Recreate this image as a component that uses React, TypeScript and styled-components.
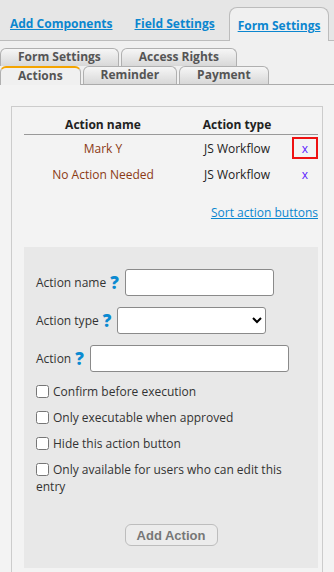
import styled, { createGlobalStyle } from "styled-components";

const Global = createGlobalStyle`
  body {
    margin: 0;
    font-family: "Open Sans", "Noto Sans", sans-serif;
    background: #f3f3f3;
    color: #222;
  }
`;

const TopBar = styled.div`
  display: flex;
  align-items: flex-end;
  gap: 6px;
  height: 40px;
  padding-left: 2px;
  background: #e6e6e6;
  border-bottom: 1px solid #bcbcbc;
`;

const TopTab = styled.a<{ $active?: boolean }>`
  display: flex;
  align-items: center;
  flex-shrink: 0;
  white-space: nowrap;
  box-sizing: border-box;
  height: ${(p) => (p.$active ? "34px" : "33px")};
  padding: 0 8px;
  font-size: 12px;
  font-weight: bold;
  color: #0b86cf;
  text-decoration: underline;
  cursor: pointer;
  ${(p) =>
    p.$active &&
    `
    background: #f0f0f0;
    border: 1px solid #bcbcbc;
    border-bottom: none;
    border-radius: 8px 8px 0 0;
    margin-bottom: -1px;
    padding-top: 2px;
  `}
`;

const SubTabs = styled.div`
  background: #f0f0f0;
  padding-top: 7px;
`;

const SubRow = styled.div<{ $base?: boolean }>`
  display: flex;
  gap: 2px;
  ${(p) => p.$base && "border-bottom: 1px solid #ababab;"}
`;

const SubTab = styled.div<{ $active?: boolean }>`
  box-sizing: border-box;
  white-space: nowrap;
  height: ${(p) => (p.$active ? "19px" : "18px")};
  padding: 0 17px;
  border: 1px solid #b0b0b0;
  border-bottom: none;
  border-radius: 6px 6px 0 0;
  font-size: 12px;
  font-weight: bold;
  line-height: 16px;
  color: #555;
  background: ${(p) => (p.$active ? "#f0f0f0" : "linear-gradient(#f6f6f6, #d8d8d8)")};
  ${(p) =>
    p.$active &&
    `
    border-top: 2px solid #f4a400;
    margin-bottom: -1px;
  `}
`;

const Panel = styled.div`
  background: #f3f3f3;
  padding: 21px 11px 0;
`;

const Box = styled.div`
  border: 1px solid #cccccc;
  border-bottom: none;
  padding: 6px 4px 12px 12px;
`;

const Table = styled.div`
  display: grid;
  grid-template-columns: 158px 110px 26px;
  font-size: 12px;
`;

const HeadCell = styled.div`
  padding: 3px 0 1px;
  line-height: 17px;
  font-weight: bold;
  text-align: center;
  color: #222;
  border-bottom: 1px solid #999;
`;

const Cell = styled.div<{ $name?: boolean }>`
  height: 26px;
  line-height: 27px;
  text-align: center;
  color: ${(p) => (p.$name ? "#8b3a14" : "#222")};
`;

const XCell = styled.div`
  height: 26px;
  display: flex;
  align-items: center;
  justify-content: center;
`;

const XBox = styled.a<{ $flagged?: boolean }>`
  box-sizing: border-box;
  width: 26px;
  height: 22px;
  display: flex;
  align-items: center;
  justify-content: center;
  color: #5b1aff;
  font-size: 12px;
  padding-top: 1px;
  border: 2px solid ${(p) => (p.$flagged ? "#ee1111" : "transparent")};
  cursor: pointer;
`;

const SortLink = styled.a`
  display: block;
  margin-top: 17px;
  text-align: right;
  font-size: 12px;
  line-height: 17px;
  color: #0b86cf;
  text-decoration: underline;
`;

const FormArea = styled.div`
  margin-top: 26px;
  background: #e8e8e8;
  padding: 22px 12px 22px;
  font-size: 12px;
  color: #333;
`;

const FieldRow = styled.div`
  display: flex;
  align-items: center;
  margin-bottom: 11px;
`;

const Label = styled.span`
  line-height: 17px;
`;

const Help = styled.span`
  margin: 0 6px 0 4px;
  font-size: 17px;
  line-height: 17px;
  font-weight: 800;
  color: #0b8ad1;
`;

const TextInput = styled.input<{ $w: number }>`
  box-sizing: border-box;
  width: ${(p) => p.$w}px;
  height: 27px;
  margin: 0;
  border: 1px solid #8a8a8a;
  border-radius: 3px;
  background: #fff;
`;

const Select = styled.select`
  box-sizing: border-box;
  width: 149px;
  height: 27px;
  margin: 0;
  border: 1px solid #8a8a8a;
  border-radius: 3px;
  background: #fff;
`;

const CheckRow = styled.label`
  display: block;
  line-height: 17px;
  margin-bottom: 9px;
`;

const Check = styled.input`
  width: 13px;
  height: 13px;
  margin: 0 4px 0 0;
  vertical-align: -2px;
`;

const ButtonRow = styled.div`
  display: flex;
  justify-content: center;
  margin-top: 29px;
`;

const AddButton = styled.button`
  box-sizing: border-box;
  width: 93px;
  height: 22px;
  padding: 0;
  font-family: "Liberation Sans", Arial, sans-serif;
  font-size: 13px;
  font-weight: bold;
  color: #777;
  background: #ececec;
  border: 1px solid #bdbdbd;
  border-radius: 6px;
`;

const actions = [
  { name: "Mark Y", type: "JS Workflow" },
  { name: "No Action Needed", type: "JS Workflow" },
];

const options = [
  "Confirm before execution",
  "Only executable when approved",
  "Hide this action button",
  "Only available for users who can edit this entry",
];

export default function App() {
  return (
    <>
      <Global />
      <TopBar>
        <TopTab>Add Components</TopTab>
        <TopTab>Field Settings</TopTab>
        <TopTab $active>Form Settings</TopTab>
      </TopBar>

      <SubTabs>
        <SubRow>
          <SubTab>Form Settings</SubTab>
          <SubTab>Access Rights</SubTab>
        </SubRow>
        <SubRow $base>
          <SubTab $active>Actions</SubTab>
          <SubTab>Reminder</SubTab>
          <SubTab>Payment</SubTab>
        </SubRow>
      </SubTabs>

      <Panel>
        <Box>
          <Table>
            <HeadCell>Action name</HeadCell>
            <HeadCell>Action type</HeadCell>
            <HeadCell />
            {actions.map((a, i) => (
              <>
                <Cell $name key={a.name}>{a.name}</Cell>
                <Cell>{a.type}</Cell>
                <XCell>
                  <XBox $flagged={i === 0}>x</XBox>
                </XCell>
              </>
            ))}
          </Table>

          <SortLink>Sort action buttons</SortLink>

          <FormArea>
            <FieldRow>
              <Label>Action name</Label>
              <Help>?</Help>
              <TextInput $w={149} />
            </FieldRow>
            <FieldRow>
              <Label>Action type</Label>
              <Help>?</Help>
              <Select>
                <option></option>
              </Select>
            </FieldRow>
            <FieldRow>
              <Label>Action</Label>
              <Help>?</Help>
              <TextInput $w={199} />
            </FieldRow>

            {options.map((o) => (
              <CheckRow key={o}>
                <Check type="checkbox" />
                {o}
              </CheckRow>
            ))}

            <ButtonRow>
              <AddButton>Add Action</AddButton>
            </ButtonRow>
          </FormArea>
        </Box>
      </Panel>
    </>
  );
}
